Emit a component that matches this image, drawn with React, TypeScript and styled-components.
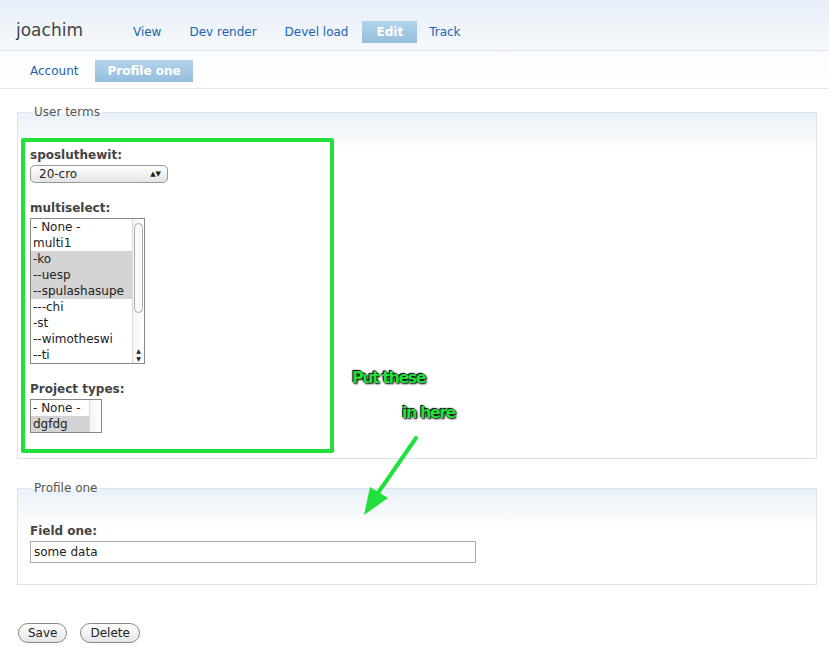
import React from 'react';
import styled, { createGlobalStyle } from 'styled-components';

const Global = createGlobalStyle`
  body { margin: 0; font-family: "DejaVu Sans", Verdana, sans-serif; font-size: 12px; color: #333; background: #fff; }
`;

const Page = styled.div`
  position: relative;
  width: 829px;
  height: 660px;
  overflow: hidden;
`;

const Header = styled.div`
  background: linear-gradient(#e6eef7, #f6f9fc);
  border-bottom: 1px solid #dde6ee;
  display: flex;
  align-items: center;
  height: 51px;
  padding: 10px 0 0 16px;
  box-sizing: border-box;
`;

const Title = styled.h1`
  margin: 0 36px 0 0;
  font-size: 17px;
  font-weight: normal;
  color: #444;
`;

const Tabs = styled.div`
  display: flex;
  align-items: center;
`;

const Tab = styled.span<{ $active?: boolean; $small?: boolean }>`
  padding: 4px ${p => (p.$small ? '12px' : '14px')};
  margin-top: 3px;
  color: ${p => (p.$active ? '#fff' : '#1a64b0')};
  font-weight: ${p => (p.$active ? 'bold' : 'normal')};
  background: ${p => (p.$active ? 'linear-gradient(#b3d4ea, #94bedd)' : 'none')};
  font-size: 12px;
`;

const SubHeader = styled.div`
  display: flex;
  align-items: center;
  height: 38px;
  padding: 0 0 0 18px;
  border-bottom: 1px solid #e3e9ef;
  background: linear-gradient(#fbfcfe, #fff);
  box-sizing: border-box;
  & > span { margin-top: 2px; }
  & > span + span { margin-left: 5px; }
`;

const Content = styled.div`
  padding: 16px 12px 0 17px;
`;

const Fieldset = styled.fieldset<{ $h: number }>`
  margin: 0 0 22px;
  border: 1px solid #d8e4ee;
  padding: 19px 8px 0 3px;
  height: ${p => p.$h}px;
  box-sizing: border-box;
  background: linear-gradient(#eaf1f8, #fff 40px);
  & > legend { padding: 0 3px; margin-left: 10px; color: #555; font-size: 12px; }
`;

const Highlight = styled.div`
  width: 313px;
  height: 315px;
  border: 4px solid #22e03c;
  border-radius: 2px;
  box-sizing: border-box;
  padding: 6px 5px;
  background: #fff;
`;

const Label = styled.div`
  font-weight: bold;
  color: #444;
  margin-bottom: 3px;
`;

const Item = styled.div`
  margin-bottom: 18px;
`;

const Dropdown = styled.div`
  width: 138px;
  height: 18px;
  border: 1px solid #999;
  border-radius: 5px;
  background: linear-gradient(#fff, #e4e4e4);
  display: flex;
  align-items: center;
  justify-content: space-between;
  padding: 0 6px 0 8px;
  box-sizing: border-box;
  font-size: 12px;
  color: #222;
`;

const ListBox = styled.div<{ $w: number }>`
  width: ${p => p.$w}px;
  border: 1px solid #888;
  display: flex;
  background: #fff;
`;

const Options = styled.div`
  flex: 1;
`;

const Opt = styled.div<{ $sel?: boolean }>`
  height: 16px;
  line-height: 16px;
  padding-left: 2px;
  color: #222;
  background: ${p => (p.$sel ? '#d4d4d4' : 'transparent')};
`;

const Scroll = styled.div`
  width: 11px;
  border-left: 1px solid #ddd;
  background: linear-gradient(90deg, #f4f4f4, #fff);
  position: relative;
`;

const Thumb = styled.div`
  margin: 4px 1px 0;
  height: 88px;
  border: 1px solid #aaa;
  border-radius: 5px;
  background: #fafafa;
`;

const Arrows = styled.div`
  position: absolute;
  bottom: 0;
  left: 0;
  right: 0;
  font-size: 6px;
  text-align: center;
  line-height: 8px;
  color: #222;
`;

const FieldBody = styled.div`
  padding: 10px 0 0 9px;
`;

const TextInput = styled.div`
  width: 446px;
  height: 22px;
  border: 1px solid #aaa;
  box-sizing: border-box;
  padding: 3px 3px;
  background: #fff;
  color: #222;
`;

const Buttons = styled.div`
  display: flex;
  gap: 13px;
  margin-top: 38px;
  margin-left: 1px;
`;

const Button = styled.span`
  border: 1px solid #888;
  border-radius: 10px;
  padding: 2px 9px;
  background: linear-gradient(#fff, #e6e6e6);
  color: #222;
  font-size: 12px;
`;

const Note = styled.div<{ $x: number; $y: number }>`
  position: absolute;
  left: ${p => p.$x}px;
  top: ${p => p.$y}px;
  font-family: "DejaVu Sans", sans-serif;
  font-weight: bold;
  font-size: 16px;
  letter-spacing: -1.5px;
  color: #22e03c;
  text-shadow: 0 0 2px #000, 1px 1px 2px #000, -1px -1px 1px #000;
`;

const Arrow = styled.svg`
  position: absolute;
  left: 360px;
  top: 435px;
`;

export default function App() {
  const multi = [
    ['- None -', false], ['multi1', false], ['-ko', true], ['--uesp', true],
    ['--spulashasupe', true], ['---chi', false], ['-st', false], ['--wimotheswi', false], ['--ti', false],
  ] as const;
  return (
    <Page>
      <Global />
      <Header>
        <Title>joachim</Title>
        <Tabs>
          <Tab>View</Tab>
          <Tab>Dev render</Tab>
          <Tab>Devel load</Tab>
          <Tab $active>Edit</Tab>
          <Tab $small>Track</Tab>
        </Tabs>
      </Header>
      <SubHeader>
        <Tab $small>Account</Tab>
        <Tab $active $small>Profile one</Tab>
      </SubHeader>
      <Content>
        <Fieldset $h={354}>
          <legend>User terms</legend>
          <Highlight>
            <Item>
              <Label>sposluthewit:</Label>
              <Dropdown><span>20-cro</span><span style={{ fontSize: 7 }}>▲▼</span></Dropdown>
            </Item>
            <Item>
              <Label>multiselect:</Label>
              <ListBox $w={113}>
                <Options>{multi.map(([t, s]) => <Opt key={t} $sel={s}>{t}</Opt>)}</Options>
                <Scroll><Thumb /><Arrows>▲<br />▼</Arrows></Scroll>
              </ListBox>
            </Item>
            <Item>
              <Label>Project types:</Label>
              <ListBox $w={70}>
                <Options><Opt>- None -</Opt><Opt $sel>dgfdg</Opt></Options>
                <Scroll />
              </ListBox>
            </Item>
          </Highlight>
        </Fieldset>
        <Fieldset $h={104}>
          <legend>Profile one</legend>
          <FieldBody>
            <Label>Field one:</Label>
            <TextInput>some data</TextInput>
          </FieldBody>
        </Fieldset>
        <Buttons>
          <Button>Save</Button>
          <Button>Delete</Button>
        </Buttons>
      </Content>
      <Note $x={352} $y={368}>Put these</Note>
      <Note $x={402} $y={403}>in here</Note>
      <Arrow width="60" height="85" viewBox="0 0 60 85">
        <path d="M56 3 L18 58" stroke="#22e03c" strokeWidth="4" strokeLinecap="round" />
        <polygon points="4,80 10,52 28,63" fill="#22e03c" />
      </Arrow>
    </Page>
  );
}
